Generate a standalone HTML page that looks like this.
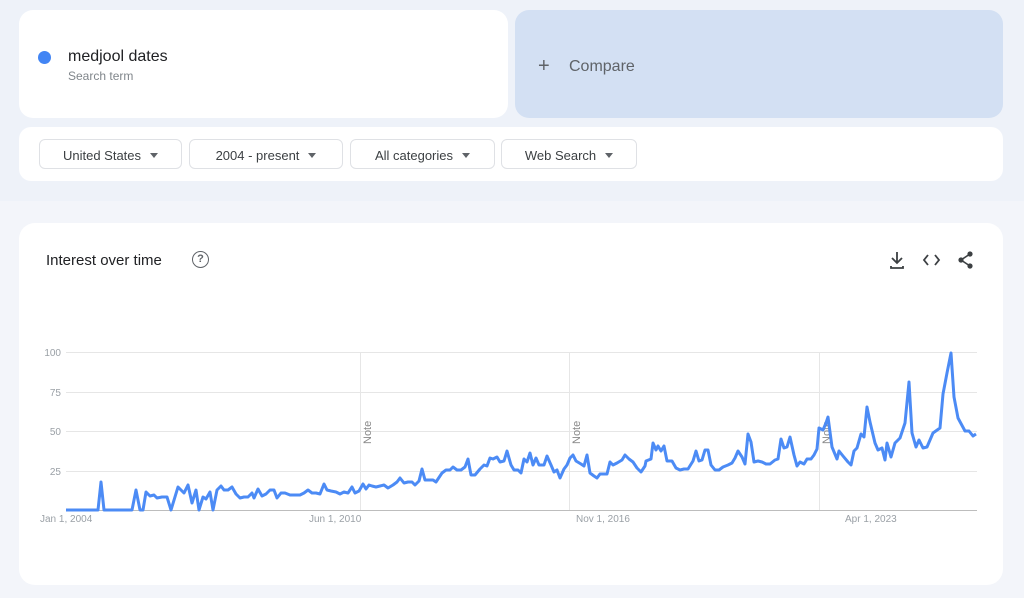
<!DOCTYPE html>
<html><head><meta charset="utf-8"><style>
body{margin:0;width:1024px;height:598px;background:#eef2f9;font-family:"Liberation Sans",sans-serif;position:relative;overflow:hidden}
.bottom{position:absolute;left:0;top:201px;width:1024px;height:397px;background:#f3f5fa}
.card{position:absolute;background:#fff;border-radius:14px}
.pill{position:absolute;top:139px;height:30px;border:1px solid #dfe1e5;border-radius:6px;box-sizing:border-box;font-size:13px;color:#3c4043;line-height:31px;text-align:center}
.pill:after{content:"";display:inline-block;margin-left:9px;border-left:4px solid transparent;border-right:4px solid transparent;border-top:5px solid #5f6368;vertical-align:2px}
.ax{position:absolute;font-size:10px;color:#9aa0a6}
</style></head><body>
<div class="bottom"></div>
<div class="card" style="left:19px;top:10px;width:489px;height:108px"></div>
<div style="position:absolute;left:38px;top:51px;width:13px;height:13px;border-radius:50%;background:#4285f4"></div>
<div style="position:absolute;left:68px;top:48px;font-size:16px;color:#202124">medjool dates</div>
<div style="position:absolute;left:68px;top:69px;font-size:12px;color:#80868b">Search term</div>
<div style="position:absolute;left:515px;top:10px;width:488px;height:108px;background:#d3e0f3;border-radius:14px"></div>
<div style="position:absolute;left:538px;top:55px;font-size:20px;color:#5f6368;font-weight:300">+</div>
<div style="position:absolute;left:569px;top:58px;font-size:16px;color:#5f6368">Compare</div>
<div class="card" style="left:19px;top:127px;width:984px;height:54px;border-radius:12px"></div>
<div class="pill" style="left:39px;width:143px">United States</div>
<div class="pill" style="left:189px;width:154px">2004 - present</div>
<div class="pill" style="left:350px;width:145px">All categories</div>
<div class="pill" style="left:501px;width:136px">Web Search</div>
<div class="card" style="left:19px;top:223px;width:984px;height:362px;border-radius:16px"></div>
<div style="position:absolute;left:46px;top:252px;font-size:15px;color:#202124">Interest over time</div>
<div style="position:absolute;left:192px;top:251px;width:17px;height:17px;border:1.8px solid #5f6368;border-radius:50%;box-sizing:border-box;font-size:11px;line-height:14px;text-align:center;color:#5f6368;font-weight:bold">?</div>
<svg style="position:absolute;left:0;top:0" width="1024" height="598">
<g stroke="#3c4043" stroke-width="1.8" fill="none">
<path d="M897 252v11M892 258l5 5 5-5M891 266v2h12v-2"/>
<path d="M928 255l-4 5 4 5M935 255l4 5-4 5"/>
</g>
<g fill="#3c4043"><circle cx="970" cy="254" r="2.6"/><circle cx="961" cy="260" r="2.6"/><circle cx="970" cy="266" r="2.6"/></g>
<path d="M970 254L961 260L970 266" stroke="#3c4043" stroke-width="1.6" fill="none"/>
<g stroke="#e6e6e6" stroke-width="1">
<line x1="66" y1="352.5" x2="977" y2="352.5"/><line x1="66" y1="392.5" x2="977" y2="392.5"/><line x1="66" y1="431.5" x2="977" y2="431.5"/><line x1="66" y1="471.5" x2="977" y2="471.5"/>
<line x1="360.5" y1="352" x2="360.5" y2="510"/><line x1="569.5" y1="352" x2="569.5" y2="510"/><line x1="819.5" y1="352" x2="819.5" y2="510"/>
</g>
<line x1="66" y1="510.5" x2="977" y2="510.5" stroke="#bdbdbd"/>
<g font-family="Liberation Sans" font-size="10" fill="#9aa0a6" text-anchor="end">
<text x="61" y="356">100</text><text x="61" y="396">75</text><text x="61" y="435">50</text><text x="61" y="475">25</text>
</g>
<g font-family="Liberation Sans" font-size="11" fill="#888">
<text transform="translate(371,444) rotate(-90)">Note</text>
<text transform="translate(580,444) rotate(-90)">Note</text>
<text transform="translate(830,444) rotate(-90)">Note</text>
</g>
<polyline fill="none" stroke="#4c8bf5" stroke-width="3" stroke-linejoin="round" points="66,510 98,510 101,482 104,510 132,510 136,490 140,510 143,510 146,492 150,496 154,495 157,498 162,497 167,497 171,510 178,487 184,493 188,485 192,503 196,490 199,510 203,497 206,499 210,492 213,510 217,490 221,486 224,490 228,490 232,487 236,494 240,498 244,497 248,497 252,493 254,498 258,489 262,496 266,494 270,490 274,490 277,498 281,493 285,493 290,495 296,495 300,495 304,493 308,490 312,493 316,493 320,494 324,484 327,490 331,491 336,492 340,494 344,492 348,493 352,487 355,493 359,491 363,484 366,489 369,485 372,486 376,487 380,486 384,485 388,488 393,485 397,482 400,478 404,483 408,482 412,482 415,485 419,481 422,469 425,480 433,480 436,482 442,473 446,470 450,470 453,467 457,470 461,470 465,467 468,459 471,475 475,475 480,469 484,465 487,466 490,458 493,459 497,457 500,462 504,461 507,451 511,465 514,470 518,470 521,473 524,459 527,462 530,453 533,465 536,458 539,465 544,465 547,456 551,465 554,472 557,470 560,478 564,469 567,465 570,458 573,455 576,461 581,464 584,466 587,455 590,473 594,476 597,478 600,474 607,474 610,462 613,465 617,463 622,460 625,455 629,459 633,462 637,468 641,472 645,466 646,461 651,459 653,443 656,450 658,446 661,451 664,446 667,461 672,461 676,468 680,470 684,469 688,469 693,461 696,451 699,461 702,460 705,450 708,450 711,465 715,470 719,470 723,467 728,465 732,463 735,458 738,451 742,457 745,464 748,434 751,442 754,462 758,461 762,462 766,464 770,464 775,460 778,459 781,439 784,448 787,447 790,437 794,455 797,466 800,462 804,464 807,459 811,459 814,455 817,449 819,428 823,430 826,423 828,417 832,447 837,459 839,451 843,456 848,462 851,465 854,451 857,448 861,434 864,437 867,407 870,422 875,443 878,450 882,448 885,460 887,443 891,457 895,443 900,438 905,423 909,382 912,433 916,447 919,440 923,448 927,447 933,433 940,428 943,394 947,373 951,353 954,397 958,418 965,431 969,431 973,436 976,434"/>
</svg>
<div class="ax" style="left:40px;top:514px">Jan 1, 2004</div>
<div class="ax" style="left:309px;top:514px">Jun 1, 2010</div>
<div class="ax" style="left:576px;top:514px">Nov 1, 2016</div>
<div class="ax" style="left:845px;top:514px">Apr 1, 2023</div>
</body></html>
